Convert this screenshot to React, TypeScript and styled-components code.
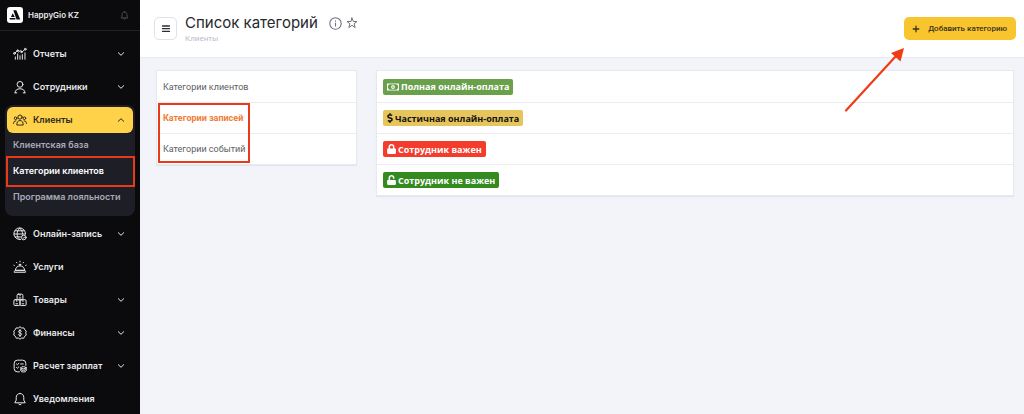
import React from "react";
import styled, { createGlobalStyle, css } from "styled-components";
import { FaDollarSign, FaLock, FaRegMoneyBillAlt, FaUnlock } from "react-icons/fa";

const GlobalStyle = createGlobalStyle`
  *, *::before, *::after { box-sizing: border-box; }
  body {
    margin: 0;
    background: #f3f4f9;
    font-family: Inter, "Liberation Sans", sans-serif;
  }
  button { font-family: inherit; }
  a { text-decoration: none; }
`;

const Page = styled.div`
  display: grid;
  grid-template-columns: 140px minmax(0, 1fr);
  min-height: 100vh;
`;

const Sidebar = styled.aside`
  background: #0b0b0d;
  color: #e9e9eb;
`;

const Brand = styled.header`
  display: flex;
  align-items: center;
  gap: 5px;
  height: 31px;
  padding: 0 11px 0 7px;
  border-bottom: 1px solid #222226;
`;

const BrandMark = styled.svg`
  width: 16px;
  height: 16px;
`;

const BrandName = styled.span`
  flex: 1;
  font-size: 8px;
  font-weight: 600;
`;

const BellButton = styled.button`
  display: flex;
  padding: 0;
  border: 0;
  background: none;
  color: #5e5e66;
`;

const Icon = styled.svg<{ $size: number }>`
  flex: none;
  width: ${(p) => p.$size}px;
  height: ${(p) => p.$size}px;
  fill: none;
  stroke: currentColor;
  stroke-linecap: round;
  stroke-linejoin: round;
`;

const Menu = styled.nav`
  display: flex;
  flex-direction: column;
  gap: 7px;
  padding: 10px 7px 0;
`;

const MenuButton = styled.button<{ $active?: boolean }>`
  display: flex;
  align-items: center;
  gap: 6px;
  width: 100%;
  height: 26px;
  padding: 0 7px 0 6px;
  border: 0;
  border-radius: 6px;
  background: ${(p) => (p.$active ? "#ffd24a" : "none")};
  color: ${(p) => (p.$active ? "#2b2820" : "inherit")};
  text-align: left;
`;

const MenuLabel = styled.span`
  flex: 1;
  font-size: 9px;
  line-height: 12px;
  font-weight: 600;
  white-space: nowrap;
`;

const Group = styled.div`
  position: relative;
  margin: -2px;
  padding: 2px 2px 5px;
  border-radius: 8px;
  background: #1e1e27;
`;

const SubLink = styled.a<{ $active?: boolean }>`
  display: flex;
  align-items: center;
  height: 26px;
  padding: 0 0 3px 6px;
  color: ${(p) => (p.$active ? "#ffffff" : "#a9abb8")};
  font-size: 9px;
  font-weight: 600;
  white-space: nowrap;
`;

const mark = css`
  position: absolute;
  border: 2px solid #e8391a;
  pointer-events: none;
`;

const MenuMark = styled.span`
  ${mark}
  inset: 51px 0 29px 1px;
`;

const ListMark = styled.span`
  ${mark}
  inset: 32px 106px 1px 1px;
`;

const Arrow = styled.svg`
  position: absolute;
  top: 47px;
  right: 118px;
  width: 62px;
  height: 66px;
  pointer-events: none;
`;

const Main = styled.main`
  position: relative;
  min-width: 0;
`;

const TopBar = styled.header`
  display: flex;
  align-items: flex-start;
  gap: 8px;
  height: 58px;
  padding: 0 8px 0 14px;
  border-bottom: 1px solid #e9eaf0;
  background: #ffffff;
`;

const Burger = styled.button`
  display: flex;
  align-items: center;
  justify-content: center;
  width: 23px;
  height: 23px;
  margin-top: 17px;
  padding: 0;
  border: 1px solid #dfe1ec;
  border-radius: 5px;
  background: #ffffff;
  color: #2c2d33;
`;

const Heading = styled.div`
  flex: 1;
  padding-top: 12px;
`;

const TitleRow = styled.div`
  display: flex;
  align-items: center;
  gap: 4px;
  color: #70727c;
`;

const Title = styled.h1`
  margin: 0 7px 0 0;
  color: #26282c;
  font-size: 15px;
  line-height: 22px;
  font-weight: 400;
`;

const IconButton = styled.button`
  display: flex;
  padding: 0;
  border: 0;
  background: none;
  color: inherit;
`;

const Crumb = styled.div`
  color: #b9bccb;
  font-family: Roboto, "Liberation Sans", sans-serif;
  font-size: 8px;
  line-height: 10px;
`;

const AddButton = styled.button`
  display: flex;
  align-items: center;
  gap: 8px;
  height: 23px;
  margin-top: 17px;
  padding: 0 9px 0 8px;
  border: 0;
  border-radius: 5px;
  background: #f9c52f;
  color: #3a3220;
  font-family: Roboto, "Liberation Sans", sans-serif;
  font-size: 8px;
  font-weight: 500;
  white-space: nowrap;
`;

const Content = styled.div`
  display: grid;
  grid-template-columns: 201px minmax(0, 1fr);
  align-items: start;
  gap: 19px;
  padding: 12px 10px 12px 16px;
`;

const Card = styled.div`
  position: relative;
  border: 1px solid #e8e9ed;
  background: #ffffff;
  box-shadow: 0 1px 1px #e4e5ea;
`;

const CardList = styled.ul`
  margin: 0;
  padding: 0;
  list-style: none;
`;

const CardRow = styled.li`
  display: flex;
  align-items: center;
  height: 31px;
  padding: 0 6px;
  & + & {
    border-top: 1px solid #ebecef;
  }
`;

const CategoryLink = styled.a<{ $active?: boolean }>`
  color: ${(p) => (p.$active ? "#ee7d36" : "#5d5e62")};
  font-family: Roboto, "Liberation Sans", sans-serif;
  font-size: 9px;
  font-weight: ${(p) => (p.$active ? 700 : 400)};
`;

const Badge = styled.span<{ $bg: string; $color: string; $icon: number }>`
  display: inline-flex;
  align-items: center;
  gap: 2px;
  height: 16px;
  padding: 0 4px;
  border-radius: 2px;
  background: ${(p) => p.$bg};
  color: ${(p) => p.$color};
  font-family: "Open Sans", "Noto Sans", sans-serif;
  font-size: 9px;
  font-weight: 700;
  white-space: nowrap;

  svg {
    width: ${(p) => p.$icon}px;
    height: 10px;
  }
`;

const paths: Record<string, React.ReactNode> = {
  reports: (
    <>
      <path d="M3.500 10.200 7 6.600l2.600 2 2.800-2.400 3.400 2L20 4.600" />
      <circle cx="2.400" cy="11" r="1.500" />
      <circle cx="8" cy="6" r="1.300" />
      <circle cx="14.500" cy="8.400" r="1.300" />
      <circle cx="21" cy="3.800" r="1.500" />
      <path d="M4 21v-4M8 21v-9M12 21v-6M16 21v-8M20.500 21V10" />
    </>
  ),
  person: (
    <>
      <circle cx="12" cy="7.500" r="5" />
      <path d="M3.500 22c0-4.500 3.500-7 8.500-7s8.500 2.500 8.500 7M3.500 22h3M17.500 22h3" />
    </>
  ),
  people: (
    <>
      <circle cx="12" cy="7" r="3.600" />
      <circle cx="4.500" cy="9" r="2.300" />
      <circle cx="19.500" cy="9" r="2.300" />
      <path d="M6.500 20c0-4.500 2-7 5.500-7s5.500 2.500 5.500 7zM1 18c0-3 1-4.500 4-4.500M23 18c0-3-1-4.500-4-4.500" />
    </>
  ),
  globe: (
    <>
      <path d="M13 21.500A10 10 0 1 1 21.500 12M2 12h19M4 6.500h15M4 17h9M11.500 2c-6 5-6 15 0 19.500M11.500 2c3.500 2.700 5 6.500 5 10" />
      <circle cx="18.500" cy="18" r="4" />
      <path d="m17 18 1.200 1.200 2-2.200" />
    </>
  ),
  service: (
    <>
      <path d="M4 17.500a8 7.500 0 0 1 16 0zM2.500 21h19v-1.500l-1.500-2H4l-1.500 2zM12 10V7.500M10.500 7.500h3M12 2v1.200M6 4l.6.8M18 4l-.6.800M1.500 9l.8.400M22.500 9l-.8.400" />
    </>
  ),
  goods: (
    <>
      <rect x="7" y="2" width="10" height="9.500" rx="2" />
      <rect x="1.500" y="11.500" width="10.500" height="10" rx="2" />
      <rect x="12" y="11.500" width="10.500" height="10" rx="2" />
      <path d="M10.500 8.500h3M5 18.500h3M15.500 18.500h3M12 2v3M6.500 11.500v3M17 11.500v3" />
    </>
  ),
  finance: (
    <>
      <path d="m12 1.500 3 2 3.600-.2 1.600 3.200 2.600 2.300-1 3.200 1 3.500-2.900 2.200-1.400 3.200-3.600-.2L12 22.500l-2.900-1.800-3.600.2-1.400-3.200-2.900-2.200 1-3.500-1-3.200 2.600-2.300 1.600-3.200 3.600.200z" />
      <path d="M14.500 9c-.4-1-1.300-1.500-2.500-1.500-1.500 0-2.500.8-2.500 2.100 0 3 5.200 1.600 5.200 4.600 0 1.400-1.100 2.300-2.700 2.300-1.400 0-2.400-.6-2.700-1.700M12 6v12" />
    </>
  ),
  payroll: (
    <>
      <path d="M11 22H7.500A5.500 5.500 0 0 1 2 16.500v-9A5.500 5.500 0 0 1 7.500 2h9A5.500 5.500 0 0 1 22 7.500V11M6 8.500l1.500 1.300L10 7.500M13 8.500h4.500M6 14.500l1.500 1.300 2.500-2.300" />
      <ellipse cx="18" cy="15" rx="4.500" ry="1.800" />
      <path d="M13.500 15v5.500c0 2.400 9 2.400 9 0V15M13.500 18c0 2.200 9 2.200 9 0" />
    </>
  ),
  bell: (
    <>
      <path d="M12 2.500c-4 0-6.500 3-6.500 7v4.500L3 18.500h18L18.500 14V9.500c0-4-2.500-7-6.500-7zM9.500 20.500c.8 2 4.200 2 5 0" />
    </>
  ),
};

type GlyphProps = { name: string; size?: number; weight?: number };
const Glyph = ({ name, size = 14, weight = 1.7 }: GlyphProps) => (
  <Icon $size={size} viewBox="0 0 24 24" strokeWidth={weight} aria-hidden="true">
    {paths[name]}
  </Icon>
);

const Chevron = ({ up }: { up?: boolean }) => (
  <Icon $size={10} viewBox="0 0 10 10" strokeWidth={1} aria-hidden="true">
    <path d={up ? "M2.300 6.300 5 3.700l2.700 2.600" : "M2.300 3.700 5 6.300l2.700-2.600"} />
  </Icon>
);

type ItemProps = { icon: string; label: string; expandable?: boolean; open?: boolean };
const MenuItem = ({ icon, label, expandable, open }: ItemProps) => (
  <MenuButton type="button" $active={open} aria-expanded={expandable ? !!open : undefined}>
    <Glyph name={icon} />
    <MenuLabel>{label}</MenuLabel>
    {expandable && <Chevron up={open} />}
  </MenuButton>
);

export default function App() {
  return (
    <>
      <GlobalStyle />
      <Page>
        <Sidebar>
          <Brand>
            <BrandMark viewBox="0 0 16 16" aria-hidden="true">
              <rect width="16" height="16" rx="3" fill="#fff" />
              <path d="M6.300 3.200h3l4 9.300H9.500z" fill="#0b0b0d" />
              <path d="M5.700 6.200 7.800 10H4zM2.700 10.900h5.700v1.600H2.700z" fill="#0b0b0d" />
            </BrandMark>
            <BrandName>HappyGio KZ</BrandName>
            <BellButton type="button" aria-label="Уведомления">
              <Glyph name="bell" size={9} weight={2} />
            </BellButton>
          </Brand>
          <Menu>
            <MenuItem icon="reports" label="Отчеты" expandable />
            <MenuItem icon="person" label="Сотрудники" expandable />
            <Group>
              <MenuItem icon="people" label="Клиенты" expandable open />
              <SubLink href="#base">Клиентская база</SubLink>
              <SubLink href="#categories" $active>
                Категории клиентов
              </SubLink>
              <SubLink href="#loyalty">Программа лояльности</SubLink>
              <MenuMark />
            </Group>
            <MenuItem icon="globe" label="Онлайн-запись" expandable />
            <MenuItem icon="service" label="Услуги" />
            <MenuItem icon="goods" label="Товары" expandable />
            <MenuItem icon="finance" label="Финансы" expandable />
            <MenuItem icon="payroll" label="Расчет зарплат" expandable />
            <MenuItem icon="bell" label="Уведомления" />
          </Menu>
        </Sidebar>

        <Main>
          <TopBar>
            <Burger type="button" aria-label="Меню">
              <Icon $size={10} viewBox="0 0 10 10" strokeWidth={1.3} aria-hidden="true">
                <path d="M1.500 2h7M1.500 4.700h7M1.500 7.400h7" />
              </Icon>
            </Burger>
            <Heading>
              <TitleRow>
                <Title>Список категорий</Title>
                <IconButton type="button" aria-label="Информация">
                  <Icon $size={13} viewBox="0 0 13 13" strokeWidth={1.1} aria-hidden="true">
                    <circle cx="6.500" cy="6.500" r="5.700" />
                    <path d="M6.500 6v3M6.500 3.900v.2" />
                  </Icon>
                </IconButton>
                <IconButton type="button" aria-label="В избранное">
                  <Icon $size={12} viewBox="0 0 24 24" strokeWidth={2} aria-hidden="true">
                    <path d="m12 2 2.700 7H22l-5.800 4.600L18.300 21 12 16.700 5.700 21l2.100-7.400L2 9h7.300z" />
                  </Icon>
                </IconButton>
              </TitleRow>
              <Crumb>Клиенты</Crumb>
            </Heading>
            <AddButton type="button">
              <Icon $size={8} viewBox="0 0 8 8" strokeWidth={1.3} aria-hidden="true">
                <path d="M4 1.200v5.600M1.200 4h5.600" />
              </Icon>
              Добавить категорию
            </AddButton>
          </TopBar>

          <Content>
            <Card>
              <CardList>
                <CardRow>
                  <CategoryLink href="#clients">Категории клиентов</CategoryLink>
                </CardRow>
                <CardRow>
                  <CategoryLink href="#records" $active>
                    Категории записей
                  </CategoryLink>
                </CardRow>
                <CardRow>
                  <CategoryLink href="#events">Категории событий</CategoryLink>
                </CardRow>
              </CardList>
              <ListMark />
            </Card>
            <Card>
              <CardList>
                <CardRow>
                  <Badge $bg="#6a9f4b" $color="#fff" $icon={12}>
                    <FaRegMoneyBillAlt /> Полная онлайн-оплата
                  </Badge>
                </CardRow>
                <CardRow>
                  <Badge $bg="#e6c55c" $color="#111" $icon={6}>
                    <FaDollarSign /> Частичная онлайн-оплата
                  </Badge>
                </CardRow>
                <CardRow>
                  <Badge $bg="#f43c2c" $color="#fff" $icon={9}>
                    <FaLock /> Сотрудник важен
                  </Badge>
                </CardRow>
                <CardRow>
                  <Badge $bg="#338a1f" $color="#fff" $icon={9}>
                    <FaUnlock /> Сотрудник не важен
                  </Badge>
                </CardRow>
              </CardList>
            </Card>
          </Content>

          <Arrow viewBox="0 0 62 66" aria-hidden="true">
            <path d="M2 63.500 52 9" stroke="#f03c14" strokeWidth="2.200" strokeLinecap="round" />
            <path d="M60 1 47 6l9.500 8.500z" fill="#f03c14" />
          </Arrow>
        </Main>
      </Page>
    </>
  );
}
